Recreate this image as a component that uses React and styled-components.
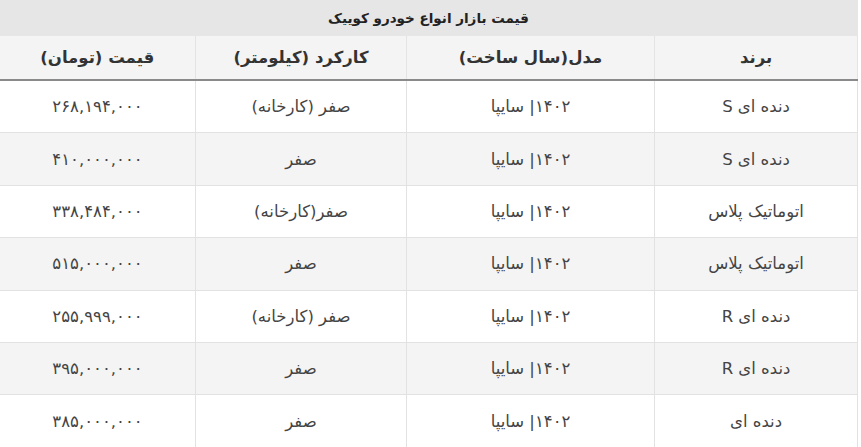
import React from 'react';
import styled, { createGlobalStyle } from 'styled-components';

const GlobalStyle = createGlobalStyle`
  body {
    margin: 0;
    background: #ffffff;
    font-family: "DejaVu Sans", "Noto Sans", sans-serif;
  }
`;

const Wrapper = styled.div`
  width: 858px;
  direction: rtl;
`;

const Table = styled.table`
  width: 100%;
  border-collapse: collapse;
  table-layout: fixed;
  color: #333;
`;

const Col = styled.col`
  width: ${p => p.$w}px;
`;

const Caption = styled.caption`
  background: #e6e6e6;
  height: 36px;
  line-height: 36px;
  font-size: 13.5px;
  font-weight: bold;
  color: #222;
  text-align: center;
`;

const HeadCell = styled.th`
  height: 43px;
  padding: 0;
  background: #f4f4f4;
  border-bottom: 2px solid #8a8a8a;
  border-right: 1px solid #e4e4e4;
  font-size: 16.5px;
  font-weight: bold;
  color: #333;
  text-align: center;
`;

const Row = styled.tr`
  background: ${p => (p.$alt ? '#f4f4f4' : '#ffffff')};
`;

const Cell = styled.td`
  height: 51.4px;
  border: 1px solid #e2e2e2;
  font-size: 16.5px;
  color: #444;
  text-align: center;
  padding: 0;
`;

const columns = [
  { title: 'برند', w: 203 },
  { title: 'مدل(سال ساخت)', w: 248 },
  { title: 'کارکرد (کیلومتر)', w: 211 },
  { title: 'قیمت (تومان)', w: 196 },
];

const rows = [
  ['دنده ای S', '۱۴۰۲| سایپا', 'صفر (کارخانه)', '۲۶۸,۱۹۴,۰۰۰'],
  ['دنده ای S', '۱۴۰۲| سایپا', 'صفر', '۴۱۰,۰۰۰,۰۰۰'],
  ['اتوماتیک پلاس', '۱۴۰۲| سایپا', 'صفر(کارخانه)', '۳۳۸,۴۸۴,۰۰۰'],
  ['اتوماتیک پلاس', '۱۴۰۲| سایپا', 'صفر', '۵۱۵,۰۰۰,۰۰۰'],
  ['دنده ای R', '۱۴۰۲| سایپا', 'صفر (کارخانه)', '۲۵۵,۹۹۹,۰۰۰'],
  ['دنده ای R', '۱۴۰۲| سایپا', 'صفر', '۳۹۵,۰۰۰,۰۰۰'],
  ['دنده ای', '۱۴۰۲| سایپا', 'صفر', '۳۸۵,۰۰۰,۰۰۰'],
];

const App = () => (
  <Wrapper>
    <GlobalStyle />
    <Table>
      <Caption>قیمت بازار انواع خودرو کوییک</Caption>
      <colgroup>
        {columns.map(c => (
          <Col key={c.title} $w={c.w} />
        ))}
      </colgroup>
      <thead>
        <tr>
          {columns.map(c => (
            <HeadCell key={c.title}>{c.title}</HeadCell>
          ))}
        </tr>
      </thead>
      <tbody>
        {rows.map((r, i) => (
          <Row key={i} $alt={i % 2 === 1}>
            {r.map((v, j) => (
              <Cell key={j}>{v}</Cell>
            ))}
          </Row>
        ))}
      </tbody>
    </Table>
  </Wrapper>
);

export default App;
